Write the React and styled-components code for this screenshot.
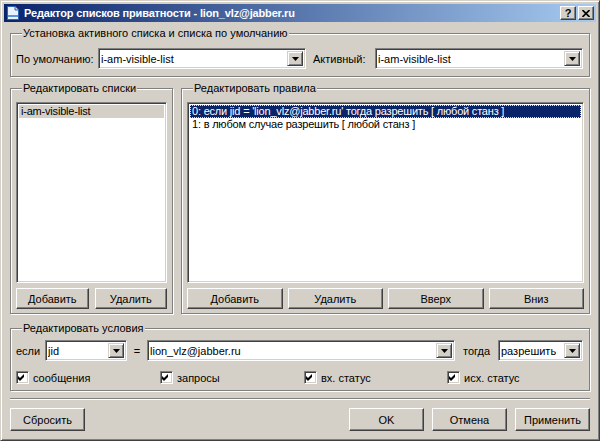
import styled, { createGlobalStyle } from "styled-components";

const GlobalStyle = createGlobalStyle`
  html, body {
    margin: 0;
    padding: 0;
    background: #d4d0c8;
  }
  body {
    font-family: "Liberation Sans", Arial, sans-serif;
    font-size: 11px;
    color: #000;
  }
  * {
    box-sizing: border-box;
  }
`;

const Window = styled.div`
  width: 600px;
  height: 441px;
  display: flex;
  flex-direction: column;
  padding: 3px;
  background: #d4d0c8;
  border: 1px solid;
  border-color: #d4d0c8 #404040 #404040 #d4d0c8;
  box-shadow: inset 1px 1px #fff, inset -1px -1px #808080;
`;

const TitleBar = styled.div`
  height: 18px;
  display: flex;
  align-items: center;
  padding: 0 2px 0 1px;
  background: linear-gradient(to right, #0a246a, #a6caf0);
  color: #fff;
  font-weight: bold;
  font-size: 11px;
`;

const TitleIcon = styled.svg`
  width: 16px;
  height: 16px;
  margin-right: 3px;
  flex-shrink: 0;
`;

const TitleText = styled.span`
  flex: 1;
  white-space: nowrap;
  letter-spacing: -0.15px;
`;

const CaptionButtons = styled.div`
  display: flex;
  gap: 2px;
`;

const CaptionButton = styled.div`
  width: 16px;
  height: 14px;
  display: flex;
  align-items: center;
  justify-content: center;
  background: #d4d0c8;
  border: 1px solid;
  border-color: #fff #404040 #404040 #fff;
  box-shadow: inset -1px -1px #808080;
  color: #000;
  font-weight: bold;
  font-size: 11px;
  line-height: 1;
`;

const Body = styled.div`
  display: flex;
  flex-direction: column;
  padding: 0 6px;
`;

const Group = styled.fieldset`
  margin: ${(p) => p.$top}px 0 0;
  padding: ${(p) => p.$pad};
  min-width: 0;
  border: 1px solid #808080;
  box-shadow: inset 1px 1px #fff, 1px 1px #fff;
  ${(p) => (p.$width ? `width: ${p.$width}px; flex-shrink: 0;` : "flex: 1;")}
  display: flex;
  flex-direction: column;
`;

const Legend = styled.legend`
  margin-left: 6px;
  padding: 0 1px;
  line-height: 13px;
  height: 13px;
  background: #d4d0c8;
`;

const FieldRow = styled.div`
  display: grid;
  grid-template-columns: ${(p) => p.$cols};
  align-items: center;
  height: ${(p) => p.$h}px;
  margin-top: ${(p) => p.$mt || 0}px;
`;

const Label = styled.span`
  white-space: nowrap;
  padding-left: ${(p) => p.$pl || 0}px;
  text-align: ${(p) => p.$align || "left"};
`;

const Sunken = styled.div`
  background: #fff;
  border: 1px solid;
  border-color: #808080 #fff #fff #808080;
  box-shadow: inset 1px 1px #404040, inset -1px -1px #d4d0c8;
`;

const ComboBox = styled(Sunken)`
  height: 21px;
  display: flex;
  align-items: stretch;
  padding: 2px;
`;

const ComboValue = styled.span`
  flex: 1;
  line-height: 17px;
  white-space: nowrap;
  overflow: hidden;
`;

const DropButton = styled.div`
  width: 16px;
  display: flex;
  align-items: center;
  justify-content: center;
  background: #d4d0c8;
  border: 1px solid;
  border-color: #d4d0c8 #404040 #404040 #d4d0c8;
  box-shadow: inset 1px 1px #fff, inset -1px -1px #808080;
`;

const Columns = styled.div`
  display: flex;
  gap: 8px;
  margin-top: 5px;
`;

const ListBox = styled(Sunken)`
  height: 181px;
  padding: 2px;
  overflow: hidden;
`;

const ListItem = styled.div`
  height: 13px;
  line-height: 13px;
  padding-left: 2px;
  white-space: nowrap;
  letter-spacing: -0.2px;
  background: ${(p) => (p.$active ? "#0a246a" : p.$selected ? "#d4d0c8" : "transparent")};
  color: ${(p) => (p.$active ? "#fff" : "#000")};
  outline: ${(p) => (p.$active ? "1px dotted #f5db95" : "none")};
  outline-offset: -1px;
`;

const ButtonRow = styled.div`
  display: flex;
  gap: ${(p) => p.$gap}px;
  margin-top: 5px;
`;

const Button = styled.button`
  height: ${(p) => p.$h || 21}px;
  ${(p) => (p.$w ? `width: ${p.$w}px;` : "flex: 1;")}
  padding: 0;
  margin: 0;
  font-family: inherit;
  font-size: 11px;
  color: #000;
  background: #d4d0c8;
  border: 1px solid;
  border-color: #fff #404040 #404040 #fff;
  box-shadow: inset -1px -1px #808080;
`;

const CheckCell = styled.label`
  display: flex;
  align-items: center;
  gap: 4px;
  white-space: nowrap;
`;

const CheckBox = styled(Sunken)`
  width: 13px;
  height: 13px;
  flex-shrink: 0;
`;

const Separator = styled.div`
  margin-top: 7px;
  height: 2px;
  border-top: 1px solid #808080;
  border-bottom: 1px solid #fff;
`;

const Footer = styled.div`
  display: flex;
  gap: 8px;
  margin-top: 8px;
`;

const Spacer = styled.div`
  flex: 1;
`;

const Arrow = () => (
  <svg width="7" height="4" viewBox="0 0 7 4">
    <polygon points="0,0 7,0 3.5,4" fill="#000" />
  </svg>
);

const Combo = ({ value }) => (
  <ComboBox>
    <ComboValue>{value}</ComboValue>
    <DropButton>
      <Arrow />
    </DropButton>
  </ComboBox>
);

const Check = ({ label }) => (
  <CheckCell>
    <CheckBox>
      <svg width="11" height="11" viewBox="0 0 11 11" style={{ display: "block" }}>
        <path d="M1 4 L3 6 L7 2 V5 L3 9 L1 7 Z" fill="#000" />
      </svg>
    </CheckBox>
    {label}
  </CheckCell>
);

const App = () => {
  const rules = [
    "0: если jid = 'lion_vlz@jabber.ru' тогда разрешить [ любой станз ]",
    "1: в любом случае разрешить [ любой станз ]",
  ];
  return (
    <>
      <GlobalStyle />
      <Window>
        <TitleBar>
          <TitleIcon viewBox="0 0 16 16">
            <path d="M2.5 1.5 H10 L13.5 5 V14.5 H2.5 Z" fill="#eaf2ff" stroke="#2f62b4" />
            <path d="M10 1.5 V5 H13.5" fill="#c9dcf7" stroke="#2f62b4" />
            <rect x="3" y="10" width="10" height="2" fill="#5b95e0" />
          </TitleIcon>
          <TitleText>Редактор списков приватности - lion_vlz@jabber.ru</TitleText>
          <CaptionButtons>
            <CaptionButton>?</CaptionButton>
            <CaptionButton>
              <svg width="8" height="7" viewBox="0 0 8 7">
                <path d="M0.5 0 L7.5 7 M7.5 0 L0.5 7" stroke="#000" strokeWidth="1.6" />
              </svg>
            </CaptionButton>
          </CaptionButtons>
        </TitleBar>

        <Body>
          <Group $top={5} $pad="8px 6px 7px 5px">
            <Legend>Установка активного списка и списка по умолчанию</Legend>
            <FieldRow $cols="82px 208px 69px 1fr" $h={21}>
              <Label>По умолчанию:</Label>
              <Combo value="i-am-visible-list" />
              <Label $pl={7}>Активный:</Label>
              <Combo value="i-am-visible-list" />
            </FieldRow>
          </Group>

          <Columns>
            <Group $top={0} $pad="7px 5px 4px" $width={163}>
              <Legend>Редактировать списки</Legend>
              <ListBox>
                <ListItem $selected>i-am-visible-list</ListItem>
              </ListBox>
              <ButtonRow $gap={6}>
                <Button>Добавить</Button>
                <Button>Удалить</Button>
              </ButtonRow>
            </Group>
            <Group $top={0} $pad="7px 5px 4px">
              <Legend>Редактировать правила</Legend>
              <ListBox>
                {rules.map((r, i) => (
                  <ListItem key={r} $active={i === 0}>
                    {r}
                  </ListItem>
                ))}
              </ListBox>
              <ButtonRow $gap={5}>
                <Button>Добавить</Button>
                <Button>Удалить</Button>
                <Button>Вверх</Button>
                <Button>Вниз</Button>
              </ButtonRow>
            </Group>
          </Columns>

          <Group $top={8} $pad="5px 6px 6px 5px">
            <Legend>Редактировать условия</Legend>
            <FieldRow $cols="29px 82px 20px 308px 43px 1fr" $h={21}>
              <Label>если</Label>
              <Combo value="jid" />
              <Label $align="center">=</Label>
              <Combo value="lion_vlz@jabber.ru" />
              <Label $pl={8}>тогда</Label>
              <Combo value="разрешить" />
            </FieldRow>
            <FieldRow $cols="144px 144px 143px 1fr" $h={13} $mt={10}>
              <Check label="сообщения" />
              <Check label="запросы" />
              <Check label="вх. статус" />
              <Check label="исх. статус" />
            </FieldRow>
          </Group>

          <Separator />

          <Footer>
            <Button $w={75} $h={23}>Сбросить</Button>
            <Spacer />
            <Button $w={75} $h={23}>OK</Button>
            <Button $w={75} $h={23}>Отмена</Button>
            <Button $w={75} $h={23}>Применить</Button>
          </Footer>
        </Body>
      </Window>
    </>
  );
};

export default App;
